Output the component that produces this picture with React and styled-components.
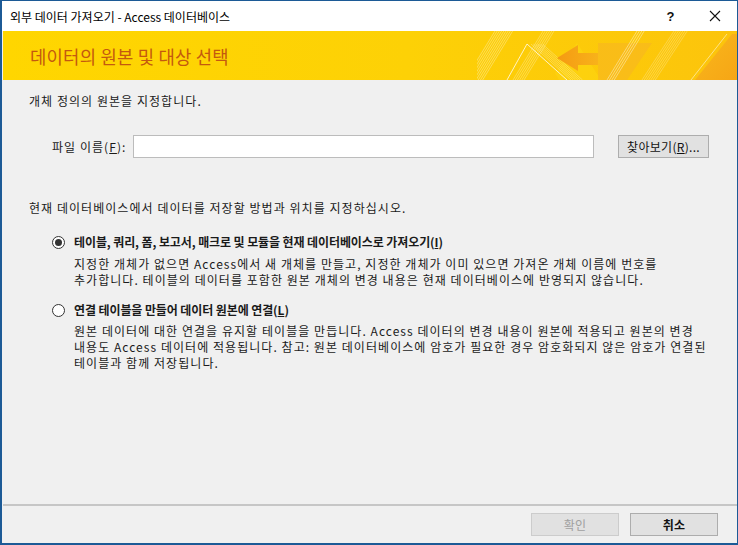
import React from 'react'
import styled, { createGlobalStyle } from 'styled-components'

const GlobalStyle = createGlobalStyle`
  html, body {
    margin: 0;
    padding: 0;
    background: #f0f0f0;
  }
  body {
    font-family: "Noto Sans CJK KR", "Noto Sans", sans-serif;
    font-size: 12px;
    letter-spacing: 1.05px;
    color: #1a1a1a;
  }
`

const Window = styled.div`
  box-sizing: border-box;
  width: 738px;
  height: 545px;
  display: flex;
  flex-direction: column;
  background: #f0f0f0;
  border: 1px solid #1c5a96;
  border-left-width: 2px;
  border-bottom-width: 2px;
`

const TitleBar = styled.div`
  height: 30px;
  flex: none;
  display: flex;
  align-items: center;
  background: #fff;
  padding: 0 0 0 8px;
`

const TitleText = styled.div`
  flex: 1;
  font-size: 12px;
  letter-spacing: 0;
  color: #000;
`

const TitleButton = styled.div`
  width: 44px;
  height: 30px;
  display: flex;
  align-items: center;
  justify-content: center;
  font-family: "Liberation Sans", sans-serif;
  font-size: 13px;
  font-weight: ${p => (p.bold ? 700 : 400)};
  color: #111;
`

const Banner = styled.div`
  position: relative;
  height: 49px;
  flex: none;
  margin-left: 1px;
  display: flex;
  align-items: center;
  padding-left: 27px;
  background: linear-gradient(90deg, #ffd600 0%, #fdd106 55%, #fcc40c 100%);
  overflow: hidden;
`

const BannerTitle = styled.div`
  position: relative;
  z-index: 1;
  font-size: 17.8px;
  letter-spacing: 0.2px;
  color: #c4590f;
`

const BannerArt = styled.svg`
  position: absolute;
  right: 0;
  top: 0;
`

const Content = styled.div`
  flex: 1;
  padding: 13px 0 0 27px;
  display: flex;
  flex-direction: column;
`

const Para = styled.div`
  line-height: 16px;
  margin-top: ${p => p.top || 0}px;
`

const FileRow = styled.div`
  display: flex;
  align-items: center;
  margin-top: 26px;
  padding-left: 23px;
`

const FileLabel = styled.div`
  width: 81px;
`

const TextInput = styled.div`
  box-sizing: border-box;
  width: 461px;
  height: 23px;
  background: #fff;
  border: 1px solid #bcbcbc;
`

const Button = styled.div`
  box-sizing: border-box;
  width: ${p => p.w || 88}px;
  height: 23px;
  display: flex;
  align-items: center;
  justify-content: center;
  background: #e1e1e1;
  border: 1px solid ${p => (p.disabled ? '#cccccc' : '#adadad')};
  color: ${p => (p.disabled ? '#a0a0a0' : '#111')};
  font-size: 12px;
  letter-spacing: 0.3px;
  font-weight: ${p => (p.bold ? 700 : 400)};
  margin-left: ${p => p.ml || 0}px;
`

const Key = styled.span`
  text-decoration: underline;
`

const Option = styled.div`
  display: flex;
  align-items: center;
  margin-top: ${p => p.top}px;
  padding-left: 23px;
`

const Radio = styled.div`
  box-sizing: border-box;
  width: 13px;
  height: 13px;
  border-radius: 50%;
  border: 1px solid #333;
  background: #fff;
  display: flex;
  align-items: center;
  justify-content: center;
  margin-right: 9px;

  &::after {
    content: '';
    display: ${p => (p.checked ? 'block' : 'none')};
    width: 7px;
    height: 7px;
    border-radius: 50%;
    background: #333;
  }
`

const OptionLabel = styled.div`
  font-size: 12px;
  font-weight: 700;
  letter-spacing: -0.1px;
  line-height: 16px;
`

const OptionDesc = styled.div`
  padding-left: 45px;
  margin-top: ${p => p.top}px;
  line-height: 16px;
`

const Separator = styled.div`
  height: 2px;
  flex: none;
  margin-left: 1px;
  background: #c6c6c6;
`

const Footer = styled.div`
  height: 37px;
  flex: none;
  display: flex;
  justify-content: flex-end;
  align-items: flex-start;
  padding: 7px 19px 0 0;
  box-sizing: border-box;
`

function Art() {
  const stripes = (x0, n, gap, len, op) =>
    Array.from({ length: n }, (_, i) => (
      <line
        key={i}
        x1={x0 + i * gap}
        y1={49}
        x2={x0 + i * gap + len}
        y2={0}
        stroke="#fff"
        strokeOpacity={op}
        strokeWidth="0.8"
      />
    ))
  return (
    <BannerArt width="260" height="49" viewBox="0 0 260 49">
      <defs>
        <linearGradient id="og" x1="0" y1="0" x2="1" y2="0">
          <stop offset="0" stopColor="#f59a12" />
          <stop offset="1" stopColor="#f8b21a" />
        </linearGradient>
        <linearGradient id="rg" x1="0" y1="0" x2="1" y2="1">
          <stop offset="0" stopColor="#f9b81c" />
          <stop offset="1" stopColor="#f6a515" />
        </linearGradient>
      </defs>
      {stripes(-12, 9, 2.2, 30, 0.4)}
      {stripes(36, 6, 2.2, 30, 0.35)}
      <polygon points="78,42 100,12 124,49 82,49" fill="#fdd510" opacity="0.6" />
      <polyline points="30,49 50,13 90,49" fill="none" stroke="#fff" strokeOpacity="0.75" strokeWidth="1" />
      {Array.from({ length: 6 }, (_, i) => (
        <line key={'d' + i} x1={54 + i * 2.3} y1={13} x2={94 + i * 2.3} y2={49} stroke="#fff" strokeOpacity="0.35" strokeWidth="0.8" />
      ))}
      <polygon points="80,27 101,14 101,22 121,22 121,34 101,34 101,40" fill="url(#og)" />
      <polygon points="121,12 175,12 150,49 121,49" fill="#f8b81e" opacity="0.7" />
      {stripes(130, 4, 2.4, 30, 0.5)}
      {stripes(165, 7, 2.2, 32, 0.3)}
      <polygon points="218,49 255,3 262,3 262,49" fill="url(#rg)" />
      <polyline points="214,49 250,3" fill="none" stroke="#fff" strokeOpacity="0.5" strokeWidth="1" />
    </BannerArt>
  )
}

export default function App() {
  return (
    <>
      <GlobalStyle />
      <Window>
        <TitleBar>
          <TitleText>외부 데이터 가져오기 - Access 데이터베이스</TitleText>
          <TitleButton bold>?</TitleButton>
          <TitleButton>
            <svg width="12" height="12" viewBox="0 0 12 12">
              <path d="M1 1 L11 11 M11 1 L1 11" stroke="#111" strokeWidth="1.1" />
            </svg>
          </TitleButton>
        </TitleBar>
        <Banner>
          <BannerTitle>데이터의 원본 및 대상 선택</BannerTitle>
          <Art />
        </Banner>
        <Content>
          <Para>개체 정의의 원본을 지정합니다.</Para>
          <FileRow>
            <FileLabel>
              파일 이름(<Key>F</Key>):
            </FileLabel>
            <TextInput />
            <Button w={91} ml={24}>
              찾아보기(<Key>R</Key>)...
            </Button>
          </FileRow>
          <Para top={42}>현재 데이터베이스에서 데이터를 저장할 방법과 위치를 지정하십시오.</Para>
          <Option top={18}>
            <Radio checked />
            <OptionLabel>
              테이블, 쿼리, 폼, 보고서, 매크로 및 모듈을 현재 데이터베이스로 가져오기(<Key>I</Key>)
            </OptionLabel>
          </Option>
          <OptionDesc top={6}>
            지정한 개체가 없으면 Access에서 새 개체를 만들고, 지정한 개체가 이미 있으면 가져온 개체 이름에 번호를
            <br />
            추가합니다. 테이블의 데이터를 포함한 원본 개체의 변경 내용은 현재 데이터베이스에 반영되지 않습니다.
          </OptionDesc>
          <Option top={14}>
            <Radio />
            <OptionLabel>
              연결 테이블을 만들어 데이터 원본에 연결(<Key>L</Key>)
            </OptionLabel>
          </Option>
          <OptionDesc top={5}>
            원본 데이터에 대한 연결을 유지할 테이블을 만듭니다. Access 데이터의 변경 내용이 원본에 적용되고 원본의 변경
            <br />
            내용도 Access 데이터에 적용됩니다. 참고: 원본 데이터베이스에 암호가 필요한 경우 암호화되지 않은 암호가 연결된
            <br />
            테이블과 함께 저장됩니다.
          </OptionDesc>
        </Content>
        <Separator />
        <Footer>
          <Button disabled>확인</Button>
          <Button bold ml={11}>
            취소
          </Button>
        </Footer>
      </Window>
    </>
  )
}
